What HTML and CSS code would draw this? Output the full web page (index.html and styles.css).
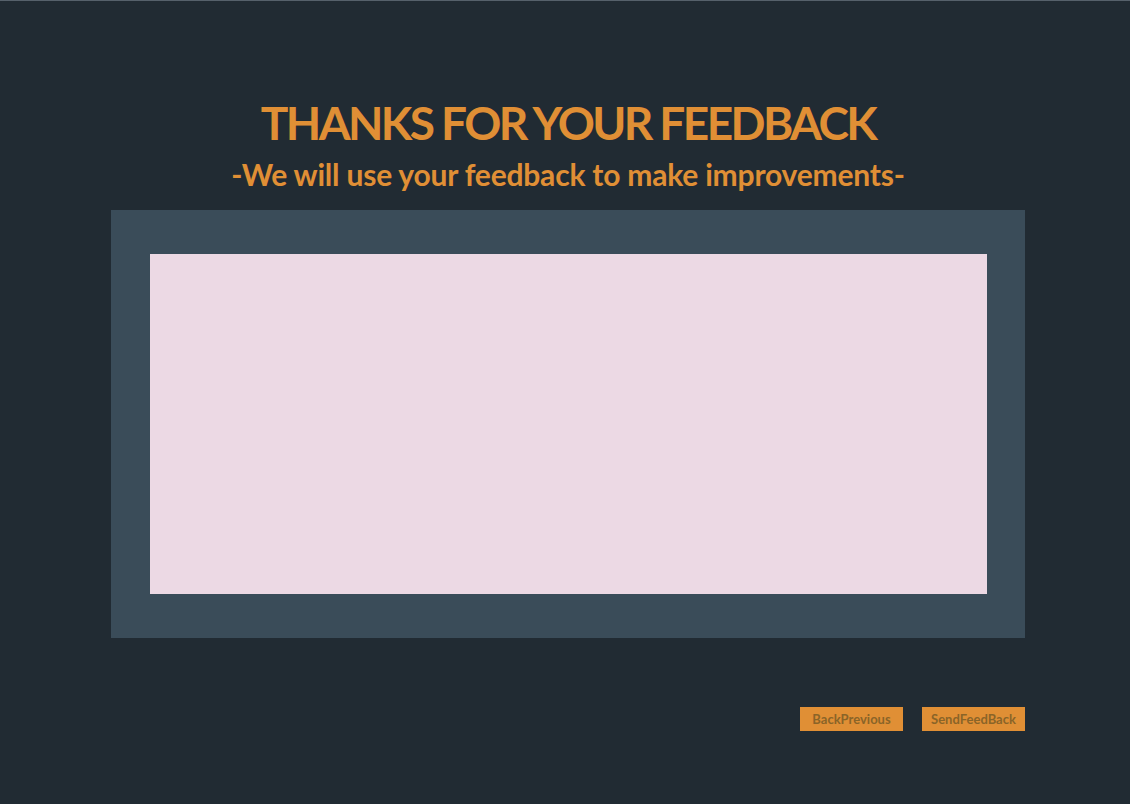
FILE: index.html
```html
<!DOCTYPE html>
<html>
<head>
<meta charset="utf-8">
<link rel="stylesheet" href="styles.css">
</head>
<body>
<div class="page">
  <header class="heading">
    <h1 class="title">THANKS FOR YOUR FEEDBACK</h1>
    <p class="subtitle">-We will use your feedback to make improvements-</p>
  </header>
  <section class="panel">
    <textarea class="feedback"></textarea>
  </section>
  <div class="actions">
    <button class="btn">BackPrevious</button>
    <button class="btn">SendFeedBack</button>
  </div>
</div>
</body>
</html>
```

FILE: styles.css
```css
html, body {
  margin: 0;
  padding: 0;
  background: #212b33;
}
body {
  width: 1130px;
  height: 804px;
  overflow: hidden;
  border-top: 1px solid #56616b;
  box-sizing: border-box;
  font-family: Lato, "Liberation Sans", sans-serif;
}
.page {
  width: 914px;
  margin-left: 111px;
  display: flex;
  flex-direction: column;
}
.heading {
  display: flex;
  flex-direction: column;
  align-items: center;
  padding-top: 96px;
  height: 113px;
  box-sizing: content-box;
}
.title {
  margin: 0;
  font-size: 46px;
  line-height: 52px;
  font-weight: 700;
  color: #e08f35;
  letter-spacing: -2.6px;
}
.subtitle {
  margin: 6px 0 0;
  font-size: 30px;
  line-height: 38px;
  font-weight: 700;
  color: #e08f35;
  letter-spacing: -0.2px;
}
.panel {
  background: #3a4c59;
  height: 428px;
  padding: 44px 38px 44px 39px;
  box-sizing: border-box;
  display: flex;
}
.feedback {
  flex: 1;
  margin: 0;
  border: none;
  background: #ecd9e4;
  resize: none;
  outline: none;
}
.actions {
  display: flex;
  justify-content: flex-end;
  gap: 19px;
  margin-top: 69px;
}
.btn {
  width: 103px;
  height: 24px;
  border: none;
  background: #e08f35;
  color: #8a6428;
  font-family: Lato, "Liberation Sans", sans-serif;
  font-weight: 700;
  font-size: 13px;
  padding: 0;
}
```
